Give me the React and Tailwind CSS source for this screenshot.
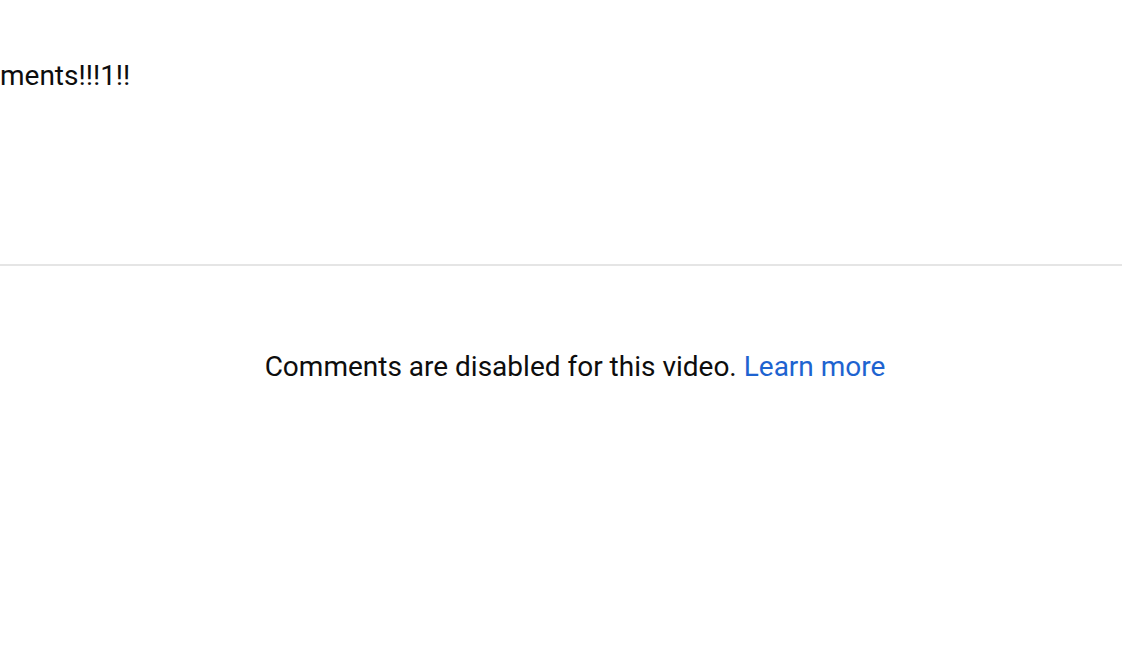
export default function App() {
  return (
    <div className="h-[670px] w-[1122px] overflow-hidden bg-white text-[#0d0d0d] font-['Roboto',sans-serif]">
      <div className="h-[264px] pt-[58px]">
        <p className="text-[28px] leading-[36px]">ments!!!1!!</p>
      </div>
      <div className="h-[2px] bg-[#e5e5e5]" />
      <div className="pt-[83px] pl-[28px] text-center">
        <p className="text-[28px] leading-[36px]">
          Comments are disabled for this video.{" "}
          <a href="#" className="text-[#1e63d0]">
            Learn more
          </a>
        </p>
      </div>
    </div>
  );
}
